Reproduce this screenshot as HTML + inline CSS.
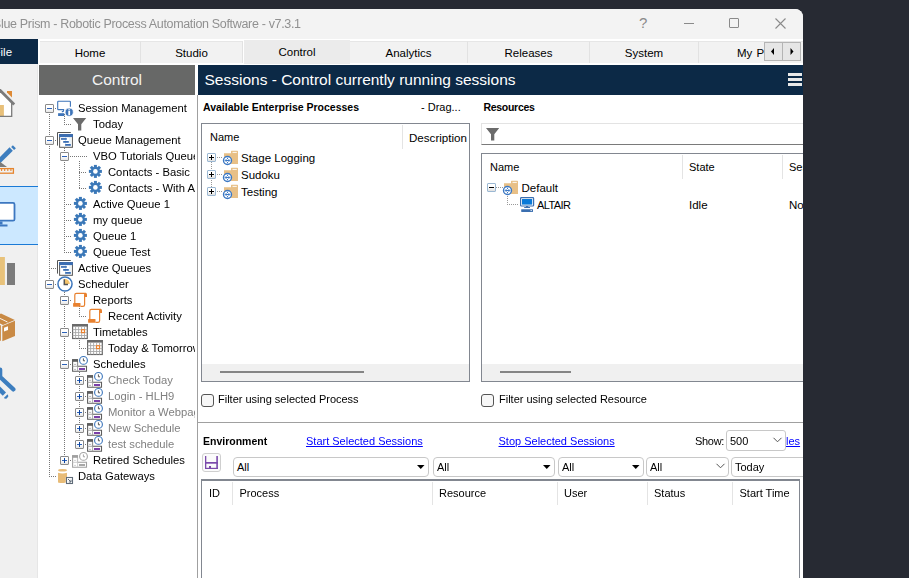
<!DOCTYPE html><html><head><meta charset="utf-8"><style>
*{box-sizing:border-box}
html,body{margin:0;padding:0}
body{width:909px;height:578px;overflow:hidden;background:#272a33;position:relative;font-family:"Liberation Sans",sans-serif;font-size:11px;color:#000}
#win{position:absolute;left:0;top:9px;width:803px;height:569px;overflow:hidden;border-top-right-radius:8px;background:#fff}
#c{position:absolute;left:0;top:-9px;width:803px;height:578px}
.a{position:absolute}
.t{position:absolute;white-space:nowrap;line-height:13px;height:13px}
.b{font-weight:bold}
svg{position:absolute;overflow:visible}
.tab{position:absolute;top:41px;height:22px;background:#f2f2f2;border-top:1px solid #e6e6e6;border-right:1px solid #e2e2e2;text-align:center;line-height:13px;padding-top:5px;font-size:11.5px}
.lnk{color:#0000ff;text-decoration:underline}
.combo{position:absolute;height:20px;border:1px solid #c8c8c8;border-radius:4px;background:#fff}
.hsep{position:absolute;width:1px;background:#e4e4e4}
.ex{position:absolute;width:9px;height:9px;border:1px solid #8a8a8a;border-radius:1px;background:linear-gradient(#fff,#fff 45%,#e6e6e6)}
.ex:before{content:"";position:absolute;left:1px;top:3px;width:5px;height:1.2px;background:#2d62b8}
.ex.p:after{content:"";position:absolute;left:3px;top:1px;width:1.2px;height:5px;background:#0a43a0}
.dv{position:absolute;width:1px;background-image:linear-gradient(#777 50%,transparent 50%);background-size:1px 2px}
.dh{position:absolute;height:1px;background-image:linear-gradient(90deg,#777 50%,transparent 50%);background-size:2px 1px}

.ex2{position:absolute;width:9px;height:9px;border:1px solid #9bb8d3;border-radius:1px;background:linear-gradient(#fff,#fff 40%,#e0e0e0)}
.ex2:before{content:"";position:absolute;left:1px;top:3px;width:5px;height:1.3px;background:#000}
.ex2.p:after{content:"";position:absolute;left:3px;top:1px;width:1.3px;height:5px;background:#000}
.dv.dl{background-image:linear-gradient(#999 50%,transparent 50%)}
.dh.dl{background-image:linear-gradient(90deg,#999 50%,transparent 50%)}
.chk{position:absolute;width:13px;height:13px;border:1px solid #555;border-radius:3px;background:#f7f7f7}
</style></head><body><svg width="0" height="0" style="position:absolute"><defs>
<symbol id="i-sess" viewBox="0 0 16 16" overflow="visible">
<path d="M13.4 6.8V1.9Q13.4 1.2 12.7 1.2H1.4Q0.7 1.2 0.7 1.9V8.9Q0.7 9.6 1.4 9.6H6.6V10.6Q6.6 11.6 5.6 11.6H4.8" fill="none" stroke="#3d74b9" stroke-width="1.1"/>
<rect x="1.1" y="13.2" width="6.2" height="2.8" fill="#3d74b9"/>
<circle cx="12.2" cy="12.2" r="4.1" fill="#3d74b9" stroke="#fff" stroke-width="0.8"/>
<rect x="11.3" y="9.3" width="1.8" height="1.1" fill="#fff"/>
<rect x="11.3" y="11" width="1.8" height="4.2" fill="#fff"/>
</symbol>
<symbol id="i-funnel" viewBox="0 0 16 16" overflow="visible">
<path d="M1 2H14.2L9.3 8.2V14.6H6V8.2Z" fill="#6b6b6b"/>
</symbol>
<symbol id="i-queue" viewBox="0 0 16 16" overflow="visible">
<path d="M0.5 13.6V0.5H13.8" fill="none" stroke="#555" stroke-width="1"/>
<rect x="2.6" y="2.6" width="12.8" height="12.7" fill="#fff" stroke="#555" stroke-width="1"/>
<rect x="2.1" y="2.1" width="13.8" height="3" fill="#3a6db3"/>
<path d="M8.5 5V15M13 5V15" stroke="#bcd8e8" stroke-width="0.6"/>
<rect x="4" y="6.1" width="5.8" height="1.7" fill="#3a6db3"/>
<rect x="6.2" y="9" width="5.6" height="1.8" fill="#3a6db3"/>
<rect x="8.2" y="12" width="5.6" height="1.8" fill="#3a6db3"/>
</symbol>
<symbol id="i-gear" viewBox="0 0 16 16" overflow="visible">
<g transform="translate(8.4 7.4)" fill="#3b78b8">
<rect x="-1.5" y="-6.5" width="3" height="13"/>
<rect x="-1.5" y="-6.5" width="3" height="13" transform="rotate(45)"/>
<rect x="-1.5" y="-6.5" width="3" height="13" transform="rotate(90)"/>
<rect x="-1.5" y="-6.5" width="3" height="13" transform="rotate(135)"/>
<circle r="4.6"/>
<circle r="2.3" fill="#fff"/>
</g>
</symbol>
<symbol id="i-clock" viewBox="0 0 16 16" overflow="visible">
<circle cx="8" cy="8" r="7.05" fill="#fff" stroke="#3b75bb" stroke-width="1.5"/>
<path d="M7.6 8V2.8A5.2 5.2 0 0 1 12.8 8Z" fill="#f5c46b"/>
<path d="M7.3 3.2V8.5H11" fill="none" stroke="#555" stroke-width="1.5"/>
</symbol>
<symbol id="i-scroll" viewBox="0 0 16 16" overflow="visible">
<path d="M2.8 11.5V3Q2.8 1.4 4.4 1.4H14Q12.6 1.6 12.6 3.5V12.7Q12.6 14.3 11 14.3H8.5" fill="none" stroke="#e8812f" stroke-width="1.2"/>
<path d="M12.2 1H14Q15 1 15 2.5V5H12.2Z" fill="#e8812f"/>
<rect x="1.1" y="11" width="7.4" height="3.8" rx="0.6" fill="#e8812f"/>
</symbol>
<symbol id="i-cal" viewBox="0 0 16 16" overflow="visible">
<rect x="0.6" y="0.6" width="14.7" height="13.9" fill="#fff" stroke="#6a6a6a" stroke-width="1.2"/>
<rect x="0" y="0" width="15.9" height="2.6" fill="#6a6a6a"/>
<path d="M3.6 2.6V14.5M6.6 2.6V14.5M9.6 2.6V14.5M12.5 2.6V14.5M0.6 5.6H15.3M0.6 8.6H15.3M0.6 11.5H15.3" stroke="#a8a8a8" stroke-width="0.9"/>
<rect x="8.8" y="5" width="4.4" height="4.2" fill="#fff"/>
<rect x="9.5" y="5.7" width="3" height="2.9" fill="none" stroke="#e8812f" stroke-width="1.2"/>
</symbol>
<symbol id="i-sched" viewBox="0 0 16 16" overflow="visible">
<path d="M0.6 3.8H5.5V10.3H14.5V15.2H0.6Z" fill="#fff" stroke="#5e5e5e" stroke-width="1.1"/>
<rect x="0.1" y="3.2" width="5.9" height="2.6" fill="#5e5e5e"/>
<path d="M5.6 5.8V15.2M0.6 10.3H5.6" stroke="#a0a0a0" stroke-width="0.9"/>
<path d="M2 8.4H4M2 13.4H4" stroke="#a8a8a8" stroke-width="0.8"/>
<rect x="7" y="12" width="6" height="2" fill="#7b3fa8"/>
<circle cx="11.5" cy="4.4" r="3.9" fill="#fff" stroke="#3b75bb" stroke-width="1.1"/>
<path d="M11.4 2.4V4.8H13" fill="none" stroke="#555" stroke-width="1"/>
</symbol>
<symbol id="i-retired" viewBox="0 0 16 16" overflow="visible">
<path d="M0.6 3.8H5.5V10.3H14.5V15.2H0.6Z" fill="#fff" stroke="#a0a0a0" stroke-width="1.1"/>
<rect x="0.1" y="3.2" width="5.9" height="2.6" fill="#a0a0a0"/>
<path d="M5.6 5.8V15.2M0.6 10.3H5.6" stroke="#c8c8c8" stroke-width="0.9"/>
<path d="M2 8.4H4M2 13.4H4" stroke="#c8c8c8" stroke-width="0.8"/>
<rect x="7" y="12" width="6" height="2" fill="#a8a8a8"/>
<circle cx="11.5" cy="4.4" r="3.9" fill="#fff" stroke="#a4a4a4" stroke-width="1.1"/>
<path d="M11.4 2.4V4.8H13" fill="none" stroke="#a4a4a4" stroke-width="1"/>
</symbol>
<symbol id="i-db" viewBox="0 0 16 16" overflow="visible">
<ellipse cx="5.5" cy="2.3" rx="4.5" ry="1.3" fill="#e8bc78"/>
<path d="M1 4.8Q5.5 6 10 4.8V9H8.8V14.6Q5 15.6 1 14.6Z" fill="#e8bc78"/>
<rect x="9.5" y="9.5" width="6" height="6" fill="#fff" stroke="#5f6b78" stroke-width="1.1"/>
<path d="M11 11L13.8 13.8M14 11.8V14H11.8" fill="none" stroke="#5f6b78" stroke-width="1"/>
</symbol>
<symbol id="i-folder" viewBox="0 0 16 16" overflow="visible">
<path d="M1 3.3H8V1.4Q8 0.8 8.6 0.8H14.4Q15 0.8 15 1.4V13.9H1Z" fill="#e8c087"/>
<path d="M9.5 2.4H13.8" stroke="#fff" stroke-width="0.9"/>
<circle cx="4.5" cy="10.5" r="4" fill="#fff" stroke="#3b78c4" stroke-width="1.4"/>
<path d="M2.3 10.5H6.7M3.4 9.2L2.2 10.5L3.4 11.8M5.6 9.2L6.8 10.5L5.6 11.8M4.5 7.8V9M4.5 12V13.2" fill="none" stroke="#3b78c4" stroke-width="1"/>
</symbol>
<symbol id="i-pc" viewBox="0 0 16 16" overflow="visible">
<rect x="0.6" y="0.6" width="13" height="8.4" rx="0.8" fill="#fff" stroke="#3b6fb0" stroke-width="1.2"/>
<rect x="2" y="2" width="10.2" height="5.6" fill="#0a7ad8"/>
<rect x="6" y="9" width="2.2" height="1.4" fill="#3b6fb0"/>
<rect x="4.2" y="10" width="5.8" height="1" fill="#3b6fb0"/>
<rect x="1.2" y="12.2" width="11.8" height="2.8" rx="0.4" fill="#3b6fb0"/>
<rect x="10.6" y="13.1" width="1.2" height="1" fill="#fff"/>
</symbol></defs></svg><div id="win"><div id="c"><div class="a" style="left:0;top:9px;width:803px;height:30px;background:#f3f3f3"></div><div class="t" style="left:-7px;top:18px;font-size:12.5px;letter-spacing:-0.33px;color:#909090;will-change:transform">Blue Prism - Robotic Process Automation Software - v7.3.1</div><div class="t" style="left:639px;top:16px;font-size:15px;color:#8a8a8a">?</div><div class="a" style="left:684px;top:23px;width:10px;height:1px;background:#8a8a8a"></div><div class="a" style="left:729px;top:18px;width:10px;height:10px;border:1px solid #8a8a8a;border-radius:1px"></div><svg style="left:775px;top:18px" width="11" height="11"><path d="M0.5 0.5L10.5 10.5M10.5 0.5L0.5 10.5" stroke="#8a8a8a" stroke-width="1.1"/></svg><div class="a" style="left:0;top:39px;width:38px;height:25px;background:#0c2946"></div><div class="t" style="left:-6.5px;top:46px;font-size:11.5px;color:#fff;">File</div><div class="tab" style="left:40px;width:101px">Home</div><div class="tab" style="left:141px;width:102px">Studio</div><div class="tab" style="left:350px;width:118px">Analytics</div><div class="tab" style="left:468px;width:122px">Releases</div><div class="tab" style="left:590px;width:109px">System</div><div class="tab" style="left:699px;width:131px"></div><div class="tab" style="left:244px;top:40px;width:106px;height:23.5px;background:#ebebeb;border-top:1px solid #ebebeb;border-right:none;padding-top:5px">Control</div><div class="t" style="left:737px;top:47px;font-size:11.5px">My</div><div class="t" style="left:756.5px;top:47px;font-size:11.5px">P</div><div class="a" style="left:764px;top:42px;width:39px;height:21px;background:#f2f2f2"></div><div class="a" style="left:764px;top:42px;width:19px;height:19px;background:#e6e6e6;border:1px solid #b4b4b4"></div><svg style="left:767px;top:43px" width="12" height="17"><path d="M7 5L4 8.5L7 12Z" fill="#000"/></svg><div class="a" style="left:782px;top:42px;width:19px;height:19px;background:#e6e6e6;border:1px solid #b4b4b4"></div><svg style="left:785px;top:43px" width="12" height="17"><path d="M5.5 5L8.5 8.5L5.5 12Z" fill="#000"/></svg><div class="a" style="left:0;top:64px;width:38px;height:514px;background:#f0f0f0"></div><div class="a" style="left:37px;top:64px;width:1px;height:514px;background:#e6e6e6"></div><div class="a" style="left:0;top:186px;width:38px;height:59px;background:#cce8ff;border-top:1px solid #1a7ad6;border-bottom:1px solid #1a7ad6"></div><svg style="left:0;top:0" width="38" height="420">
<polygon points="7,91 12,91 12,97.6 7,92.6" fill="#de8a35"/>
<polygon points="-1,91 11.7,103 11.7,116 -1,116" fill="#fff"/>
<rect x="-1" y="105" width="4.9" height="11" fill="#e8c07a"/>
<path d="M11.7 103V116.4H-1" fill="none" stroke="#7b7b7b" stroke-width="1.3"/>
<path d="M-3 87.2L14.2 104.4" stroke="#7b7b7b" stroke-width="2.8"/>
<path d="M-3 163.2L11.2 149" stroke="#3d7ebf" stroke-width="4.6"/>
<path d="M12.6 148.6L14.4 146.8" stroke="#3d7ebf" stroke-width="4.2"/>
<polygon points="-1,161 7,167 -1,167" fill="#7b7b7b"/>
<rect x="-1" y="168.6" width="14.4" height="4.6" fill="none" stroke="#e5852f" stroke-width="1.3"/>
<path d="M1.6 168.6V171M4.7 168.6V171M7.8 168.6V171M10.9 168.6V171" stroke="#e5852f" stroke-width="1.1"/>
<rect x="-6" y="202.9" width="20.5" height="17.8" rx="1.5" fill="#fff" stroke="#3c77c0" stroke-width="1.8"/>
<rect x="-1" y="221.5" width="3.5" height="3" fill="#3c77c0"/>
<rect x="-1" y="224.5" width="8.5" height="2" fill="#3c77c0"/>
<rect x="-1" y="257" width="5.9" height="28" fill="#e8c27a"/>
<rect x="7" y="263" width="8" height="22" fill="#7b7b7b"/>
<polygon points="-10,318 1,313.5 14.8,320 3,325" fill="#c98a45"/>
<path d="M-4 316.5L7.5 322" stroke="#fff" stroke-width="0.9"/>
<polygon points="2.3,326 15,320.8 15,336 2.3,341.2" fill="#c98a45"/>
<polygon points="-10,320 0.9,325.5 0.9,341 -10,336" fill="#c98a45"/>
<polygon points="4,327.8 8,326.2 8,330 4,331.6" fill="#fff"/>
<path d="M0.2 369.5V377L13.4 389.4" fill="none" stroke="#3d7ebf" stroke-width="4.2" stroke-linecap="round" stroke-linejoin="round"/>
<rect x="-3" y="364" width="3" height="12" fill="#f0f0f0"/>
<path d="M-3 386.8L4.4 394.2" stroke="#3d7ebf" stroke-width="4.6"/>
<polygon points="4,397.8 7.6,394.3 8.4,396.2 6.8,398.6 4.8,398.8" fill="#3d7ebf"/>
</svg><div class="a" style="left:39px;top:65px;width:156px;height:30px;background:#676867"></div><div class="t" style="left:92px;top:73px;font-size:15.5px;color:#f2f2f2">Control</div><div class="a" style="left:198px;top:65px;width:605px;height:30px;background:#0c2946"></div><div class="t" style="left:204.5px;top:73px;font-size:15.5px;color:#fff">Sessions - Control currently running sessions</div><div class="a" style="left:788px;top:73px;width:14px;height:3px;background:#e8e8e8"></div><div class="a" style="left:788px;top:78px;width:14px;height:3px;background:#e8e8e8"></div><div class="a" style="left:788px;top:83px;width:14px;height:3px;background:#e8e8e8"></div><div class="a" style="left:197px;top:95px;width:1px;height:483px;background:#a0a0a0"></div><div class="a" style="left:39px;top:95px;width:156px;height:483px;overflow:hidden"><div class="a" style="left:-39px;top:-95px;width:250px;height:600px"><div class="dv" style="left:49px;top:108px;height:369px"></div><div class="dv" style="left:64px;top:114px;height:11px"></div><div class="dv" style="left:64px;top:146px;height:107px"></div><div class="dv" style="left:79px;top:161px;height:28px"></div><div class="dv" style="left:64px;top:290px;height:171px"></div><div class="dv" style="left:79px;top:306px;height:11px"></div><div class="dv" style="left:79px;top:338px;height:11px"></div><div class="dv" style="left:79px;top:370px;height:75px"></div><div class="dh" style="left:49px;top:108px;width:8px"></div><div class="ex" style="left:45px;top:104px"></div><svg style="left:57px;top:100px" width="16" height="16"><use href="#i-sess"/></svg><div class="t" style="left:78px;top:102px;font-size:11.25px;">Session Management</div><div class="dh" style="left:64px;top:124px;width:8px"></div><svg style="left:72px;top:116px" width="16" height="16"><use href="#i-funnel"/></svg><div class="t" style="left:93px;top:118px;font-size:11.25px;">Today</div><div class="dh" style="left:49px;top:140px;width:8px"></div><div class="ex" style="left:45px;top:136px"></div><svg style="left:57px;top:132px" width="16" height="16"><use href="#i-queue"/></svg><div class="t" style="left:78px;top:134px;font-size:11.25px;">Queue Management</div><div class="dh" style="left:64px;top:156px;width:24px"></div><div class="ex" style="left:60px;top:152px"></div><div class="t" style="left:93px;top:150px;font-size:11.25px;">VBO Tutorials Queue</div><div class="dh" style="left:79px;top:172px;width:8px"></div><svg style="left:87px;top:164px" width="16" height="16"><use href="#i-gear"/></svg><div class="t" style="left:108px;top:166px;font-size:11.25px;">Contacts - Basic</div><div class="dh" style="left:79px;top:188px;width:8px"></div><svg style="left:87px;top:180px" width="16" height="16"><use href="#i-gear"/></svg><div class="t" style="left:108px;top:182px;font-size:11.25px;">Contacts - With Attempts</div><div class="dh" style="left:64px;top:204px;width:8px"></div><svg style="left:72px;top:196px" width="16" height="16"><use href="#i-gear"/></svg><div class="t" style="left:93px;top:198px;font-size:11.25px;">Active Queue 1</div><div class="dh" style="left:64px;top:220px;width:8px"></div><svg style="left:72px;top:212px" width="16" height="16"><use href="#i-gear"/></svg><div class="t" style="left:93px;top:214px;font-size:11.25px;">my queue</div><div class="dh" style="left:64px;top:236px;width:8px"></div><svg style="left:72px;top:228px" width="16" height="16"><use href="#i-gear"/></svg><div class="t" style="left:93px;top:230px;font-size:11.25px;">Queue 1</div><div class="dh" style="left:64px;top:252px;width:8px"></div><svg style="left:72px;top:244px" width="16" height="16"><use href="#i-gear"/></svg><div class="t" style="left:93px;top:246px;font-size:11.25px;">Queue Test</div><div class="dh" style="left:49px;top:268px;width:8px"></div><svg style="left:57px;top:260px" width="16" height="16"><use href="#i-queue"/></svg><div class="t" style="left:78px;top:262px;font-size:11.25px;">Active Queues</div><div class="dh" style="left:49px;top:284px;width:8px"></div><div class="ex" style="left:45px;top:280px"></div><svg style="left:57px;top:276px" width="16" height="16"><use href="#i-clock"/></svg><div class="t" style="left:78px;top:278px;font-size:11.25px;">Scheduler</div><div class="dh" style="left:64px;top:300px;width:8px"></div><div class="ex" style="left:60px;top:296px"></div><svg style="left:72px;top:292px" width="16" height="16"><use href="#i-scroll"/></svg><div class="t" style="left:93px;top:294px;font-size:11.25px;">Reports</div><div class="dh" style="left:79px;top:316px;width:8px"></div><svg style="left:87px;top:308px" width="16" height="16"><use href="#i-scroll"/></svg><div class="t" style="left:108px;top:310px;font-size:11.25px;">Recent Activity</div><div class="dh" style="left:64px;top:332px;width:8px"></div><div class="ex" style="left:60px;top:328px"></div><svg style="left:72px;top:324px" width="16" height="16"><use href="#i-cal"/></svg><div class="t" style="left:93px;top:326px;font-size:11.25px;">Timetables</div><div class="dh" style="left:79px;top:348px;width:8px"></div><svg style="left:87px;top:340px" width="16" height="16"><use href="#i-cal"/></svg><div class="t" style="left:108px;top:342px;font-size:11.25px;">Today &amp; Tomorrow</div><div class="dh" style="left:64px;top:364px;width:8px"></div><div class="ex" style="left:60px;top:360px"></div><svg style="left:72px;top:356px" width="16" height="16"><use href="#i-sched"/></svg><div class="t" style="left:93px;top:358px;font-size:11.25px;">Schedules</div><div class="dh" style="left:79px;top:380px;width:8px"></div><div class="ex p" style="left:75px;top:376px"></div><svg style="left:87px;top:372px" width="16" height="16"><use href="#i-sched"/></svg><div class="t" style="left:108px;top:374px;font-size:11.25px;color:#808080;">Check Today</div><div class="dh" style="left:79px;top:396px;width:8px"></div><div class="ex p" style="left:75px;top:392px"></div><svg style="left:87px;top:388px" width="16" height="16"><use href="#i-sched"/></svg><div class="t" style="left:108px;top:390px;font-size:11.25px;color:#808080;">Login - HLH9</div><div class="dh" style="left:79px;top:412px;width:8px"></div><div class="ex p" style="left:75px;top:408px"></div><svg style="left:87px;top:404px" width="16" height="16"><use href="#i-sched"/></svg><div class="t" style="left:108px;top:406px;font-size:11.25px;color:#808080;">Monitor a Webpage</div><div class="dh" style="left:79px;top:428px;width:8px"></div><div class="ex p" style="left:75px;top:424px"></div><svg style="left:87px;top:420px" width="16" height="16"><use href="#i-sched"/></svg><div class="t" style="left:108px;top:422px;font-size:11.25px;color:#808080;">New Schedule</div><div class="dh" style="left:79px;top:444px;width:8px"></div><div class="ex p" style="left:75px;top:440px"></div><svg style="left:87px;top:436px" width="16" height="16"><use href="#i-sched"/></svg><div class="t" style="left:108px;top:438px;font-size:11.25px;color:#808080;">test schedule</div><div class="dh" style="left:64px;top:460px;width:8px"></div><div class="ex p" style="left:60px;top:456px"></div><svg style="left:72px;top:452px" width="16" height="16"><use href="#i-retired"/></svg><div class="t" style="left:93px;top:454px;font-size:11.25px;">Retired Schedules</div><div class="dh" style="left:49px;top:476px;width:8px"></div><svg style="left:57px;top:468px" width="16" height="16"><use href="#i-db"/></svg><div class="t" style="left:78px;top:470px;font-size:11.25px;">Data Gateways</div></div></div><div class="t b" style="left:203px;top:101px;font-size:10.5px;">Available Enterprise Processes</div><div class="t" style="left:421px;top:101px;">- Drag...</div><div class="a" style="left:201px;top:123px;width:269px;height:259px;border:1px solid #828790;background:#fff"></div><div class="hsep" style="left:402px;top:125px;height:24px"></div><div class="t" style="left:210px;top:131px;">Name</div><div class="a" style="left:202px;top:124px;width:267px;height:30px;overflow:hidden"><div class="t" style="left:207px;top:7px;font-size:11.6px;">Description</div></div><div class="dv dl" style="left:211px;top:158px;height:34px"></div><div class="dh dl" style="left:211px;top:157px;width:12px"></div><div class="ex2 p" style="left:207px;top:153px"></div><svg style="left:223px;top:150px" width="16" height="16"><use href="#i-folder"/></svg><div class="t" style="left:241px;top:151.5px;font-size:11.5px;">Stage Logging</div><div class="dh dl" style="left:211px;top:174px;width:12px"></div><div class="ex2 p" style="left:207px;top:170px"></div><svg style="left:223px;top:167px" width="16" height="16"><use href="#i-folder"/></svg><div class="t" style="left:241px;top:168.5px;font-size:11.5px;">Sudoku</div><div class="dh dl" style="left:211px;top:191px;width:12px"></div><div class="ex2 p" style="left:207px;top:187px"></div><svg style="left:223px;top:184px" width="16" height="16"><use href="#i-folder"/></svg><div class="t" style="left:241px;top:185.5px;font-size:11.5px;">Testing</div><div class="a" style="left:202px;top:364px;width:267px;height:17px;background:#f0f0f0"></div><div class="a" style="left:220px;top:371px;width:144px;height:2px;background:#858585"></div><div class="chk" style="left:201px;top:394px"></div><div class="t" style="left:218px;top:393px;">Filter using selected Process</div><div class="t b" style="left:483.5px;top:100.5px;font-size:10.5px;letter-spacing:-0.3px">Resources</div><div class="a" style="left:481px;top:123px;width:330px;height:22px;border:1px solid #e3e3e3;border-bottom:1px solid #7a7a7a;background:#fff"></div><svg style="left:485px;top:126px" width="16" height="16"><use href="#i-funnel"/></svg><div class="a" style="left:481px;top:153px;width:330px;height:229px;border:1px solid #828790;background:#fff"></div><div class="hsep" style="left:682px;top:155px;height:24px"></div><div class="hsep" style="left:782px;top:155px;height:24px"></div><div class="t" style="left:490px;top:161px;">Name</div><div class="t" style="left:689px;top:161px;">State</div><div class="t" style="left:789px;top:161px;">Session</div><div class="dh dl" style="left:494px;top:187px;width:10px"></div><div class="ex2" style="left:487px;top:183px"></div><svg style="left:503px;top:180px" width="16" height="16"><use href="#i-folder"/></svg><div class="t" style="left:521.5px;top:181.5px;font-size:11.5px;">Default</div><div class="dv dl" style="left:507px;top:196px;height:9px"></div><div class="dh dl" style="left:507px;top:204px;width:12px"></div><svg style="left:520px;top:197px" width="16" height="16"><use href="#i-pc"/></svg><div class="t" style="left:537px;top:198.5px;letter-spacing:-0.6px">ALTAIR</div><div class="t" style="left:689px;top:198.5px;font-size:11.5px;">Idle</div><div class="t" style="left:789px;top:198.5px;font-size:11.5px;">No session</div><div class="a" style="left:482px;top:364px;width:330px;height:17px;background:#f0f0f0"></div><div class="a" style="left:500px;top:371px;width:71px;height:2px;background:#858585"></div><div class="chk" style="left:481px;top:394px"></div><div class="t" style="left:499px;top:393px;">Filter using selected Resource</div><div class="a" style="left:198px;top:422px;width:605px;height:1px;background:#a0a0a0"></div><div class="t b" style="left:203px;top:435px;font-size:10.5px;">Environment</div><div class="t lnk" style="left:306px;top:435px;">Start Selected Sessions</div><div class="t lnk" style="left:498.5px;top:435px;">Stop Selected Sessions</div><div class="t" style="left:695px;top:434.5px;letter-spacing:-0.3px">Show:</div><div class="a" style="left:786px;top:430px;width:20px;height:20px;overflow:hidden"><div class="t lnk" style="left:-64px;top:5px;">View Schedules</div></div><div class="combo" style="left:726px;top:430px;width:60px;height:21px;border-radius:3px"></div><div class="t" style="left:730px;top:434.5px;">500</div><svg style="left:773px;top:437px" width="10" height="7"><path d="M0.5 0.8L4.5 4.8L8.5 0.8" fill="none" stroke="#555" stroke-width="1"/></svg><div class="a" style="left:202px;top:453px;width:19px;height:19px;border:1px solid #cfcfcf;border-radius:3px;background:#fbfbfb"></div><svg style="left:0;top:0" width="1" height="1"><g fill="#7b4aab"><rect x="205" y="456" width="1.3" height="13"/><rect x="216.3" y="456" width="1.6" height="13"/><rect x="205" y="462" width="12.9" height="1.7"/><rect x="205" y="467.8" width="12.9" height="1.2"/><rect x="209" y="466" width="2" height="2"/></g></svg><div class="combo" style="left:233px;top:457px;width:196px"></div><div class="t" style="left:237px;top:461px;">All</div><svg style="left:417px;top:465px" width="8" height="5"><path d="M0 0H7.5L3.75 4Z" fill="#000"/></svg><div class="combo" style="left:433px;top:457px;width:122px"></div><div class="t" style="left:437px;top:461px;">All</div><svg style="left:543px;top:465px" width="8" height="5"><path d="M0 0H7.5L3.75 4Z" fill="#000"/></svg><div class="combo" style="left:558px;top:457px;width:86px"></div><div class="t" style="left:562px;top:461px;">All</div><svg style="left:632px;top:465px" width="8" height="5"><path d="M0 0H7.5L3.75 4Z" fill="#000"/></svg><div class="combo" style="left:646px;top:457px;width:83px"></div><div class="t" style="left:650px;top:461px;">All</div><svg style="left:716px;top:463px" width="10" height="7"><path d="M0.5 0.8L4.5 4.8L8.5 0.8" fill="none" stroke="#555" stroke-width="1"/></svg><div class="combo" style="left:731px;top:457px;width:99px"></div><div class="t" style="left:735px;top:461px;">Today</div><div class="a" style="left:201px;top:479px;width:599px;height:120px;border:1px solid #828790;border-top:2px solid #828790;background:#fff"></div><div class="hsep" style="left:232px;top:482px;height:23px"></div><div class="hsep" style="left:432px;top:482px;height:23px"></div><div class="hsep" style="left:557px;top:482px;height:23px"></div><div class="hsep" style="left:647px;top:482px;height:23px"></div><div class="hsep" style="left:732px;top:482px;height:23px"></div><div class="t" style="left:209px;top:487px;">ID</div><div class="t" style="left:239.5px;top:487px;">Process</div><div class="t" style="left:439px;top:487px;">Resource</div><div class="t" style="left:564px;top:487px;">User</div><div class="t" style="left:654px;top:487px;">Status</div><div class="t" style="left:739.5px;top:487px;">Start Time</div></div></div></body></html>
